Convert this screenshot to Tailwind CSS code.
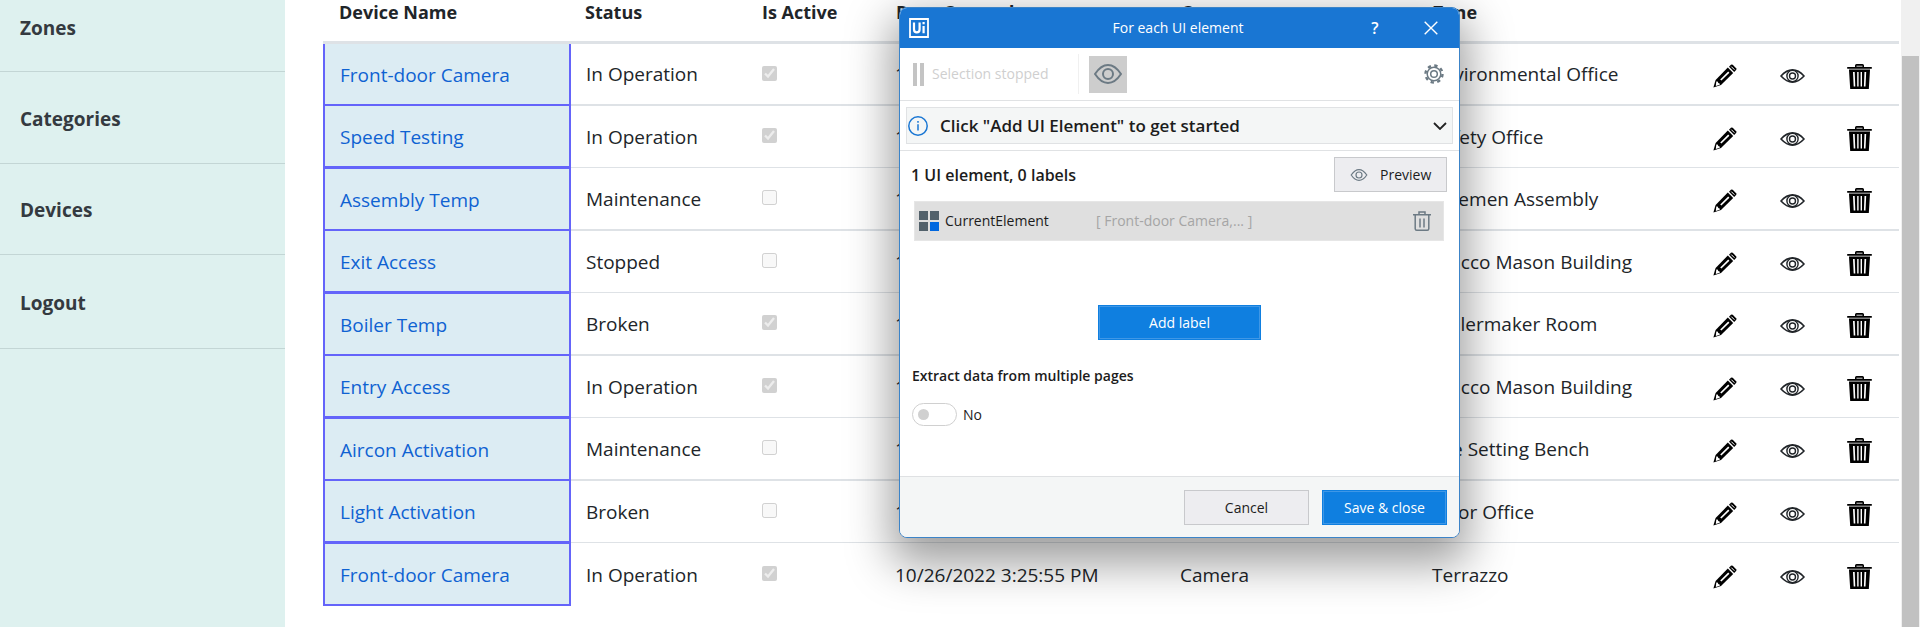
<!DOCTYPE html>
<html lang="en">
<head>
<meta charset="utf-8">
<title>Devices</title>
<script src="https://cdn.jsdelivr.net/npm/@tailwindcss/browser@4"></script>
</head>
<body class="bg-white font-['Open_Sans','Noto_Sans',sans-serif] text-[#212529]">

<svg class="hidden" aria-hidden="true">
  <symbol id="pencil" viewBox="0 0 24 24">
    <path d="M.4 23.600 2.600 16 14.800 3.600 20.200 8.900 8 21z"/>
    <path d="m16 2.800 1.900-2q.9-.8 1.800 0l3.400 3.400q.8.900 0 1.800l-1.900 1.900z"/>
    <path d="m7.200 15.400 8-7.900 1.200 1.200-8 7.900z" fill="#fff"/>
    <path d="m3.300 17.600 1.300-.2.700 1.700 1.600.6-.2 1-3.900 1.400z" fill="#fff"/>
    <path d="m18.300 2.600 3.100 3.100" stroke="#fff" stroke-width="1"/>
  </symbol>
  <symbol id="eye-bold" viewBox="0 0 25 14">
    <path d="M1 7C5 2.600 8.500.9 12.500.9S20 2.600 24 7c-4 4.400-7.500 6.100-11.500 6.100S5 11.400 1 7z" fill="none" stroke="currentColor" stroke-width="1.600"/>
    <circle cx="12.500" cy="7" r="5.600" fill="none" stroke="currentColor" stroke-width="1.400"/>
    <circle cx="12.500" cy="7" r="3" fill="none" stroke="currentColor" stroke-width="1.400"/>
  </symbol>
  <symbol id="trash-bold" viewBox="0 0 25 25">
    <path d="M8 3V1.500Q8 0 9.500 0h6Q17 0 17 1.500V3h7.800v1.800H.2V3z"/>
    <path d="M9.500 1.600h6V3h-6z" fill="#999"/>
    <path d="M2 5.500h21L21.800 25H3.200z"/>
    <path d="m6 8 .7 14.500h1.600L7.700 8zM10.200 8v14.500h1.400V8zM13.600 8v14.500H15V8zM17.500 8l-.6 14.500h1.600L19.200 8z" fill="#fff"/>
  </symbol>
  <symbol id="eye" viewBox="0 0 28 20">
    <path d="M1 10C5 4 9 1 14 1s9 3 13 9c-4 6-8 9-13 9S5 16 1 10z" fill="none" stroke="currentColor" stroke-width="2"/>
    <circle cx="14" cy="10" r="5" fill="none" stroke="currentColor" stroke-width="2"/>
  </symbol>
</svg>

<div class="flex min-h-screen">
  <nav class="w-[285px] shrink-0 bg-[#def1ef] text-[19px] leading-6 font-bold text-[#343a40]" aria-label="Main">
    <a href="#zones" class="flex h-[72px] items-center border-b border-[#c3d6d5] px-5 pb-4">Zones</a>
    <a href="#categories" class="flex h-[92px] items-center border-b border-[#c3d6d5] px-5 pt-[2px]">Categories</a>
    <a href="#devices" class="flex h-[91px] items-center border-b border-[#c3d6d5] px-5 pt-[2px]">Devices</a>
    <a href="#logout" class="flex h-[94px] items-center border-b border-[#c3d6d5] px-5 pt-[2px]">Logout</a>
  </nav>

  <main class="min-w-0 flex-1 pr-[2px] pl-[38px]">
    <table class="w-full table-fixed border-separate border-spacing-0 text-left text-[19px] leading-6">
      <colgroup>
        <col class="w-[248px]"><col class="w-[175px]"><col class="w-[134px]"><col class="w-[285px]"><col class="w-[252px]"><col><col class="w-[66px]"><col class="w-[67px]"><col class="w-[68px]">
      </colgroup>
      <thead>
        <tr class="h-[44px] align-top text-[18px] font-bold">
          <th class="border-b-3 border-[#dee2e6] px-4">Device Name</th>
          <th class="border-b-3 border-[#dee2e6] px-[14px]">Status</th>
          <th class="border-b-3 border-[#dee2e6] px-4">Is Active</th>
          <th class="border-b-3 border-[#dee2e6] px-4">Date Created</th>
          <th class="border-b-3 border-[#dee2e6] px-4">Category</th>
          <th class="border-b-3 border-[#dee2e6] px-4">Zone</th>
          <td class="border-b-3 border-[#dee2e6]"></td>
          <td class="border-b-3 border-[#dee2e6]"></td>
          <td class="border-b-3 border-[#dee2e6]"></td>
        </tr>
      </thead>
      <tbody id="rows"></tbody>
    </table>
  </main>

  <div class="w-[19px] shrink-0 bg-[#f0f0f0] pt-14 pl-px" aria-hidden="true">
    <div class="h-full w-[17px] bg-[#c1c1c1]"></div>
  </div>
</div>

<section role="dialog" aria-labelledby="dlg-title" class="absolute top-[7px] left-[899px] flex w-[561px] flex-col overflow-hidden rounded-lg border border-[#3c84c8] bg-white text-[14px] leading-5 text-[#1c1c1c] shadow-[0_18px_45px_8px_rgba(0,0,0,0.38)]">
  <header class="flex h-[40px] shrink-0 items-center bg-[#1976d3] pr-5 pl-[9px] text-white">
    <svg class="h-5 w-5" viewBox="0 0 20 20" fill="none" stroke="#fff" aria-hidden="true">
      <path d="M1 1h18v18H1z" stroke-width="1.800"/>
      <path d="M5 4.500v6.700q0 3.200 2.800 3.200t2.800-3.200V4.500M14.600 8v7.200" stroke-width="2.200"/>
      <path d="M14.600 4v2.300" stroke-width="2.200"/>
    </svg>
    <h1 id="dlg-title" class="flex-1 pl-16 text-center">For each UI element</h1>
    <button type="button" aria-label="Help" class="w-6 text-[16px] font-semibold">?</button>
    <button type="button" aria-label="Close" class="ml-9 flex w-4 justify-center">
      <svg class="h-[14px] w-[14px]" viewBox="0 0 14 14" fill="none" stroke="#fff" stroke-width="1.400"><path d="m.7.7 12.600 12.600M13.300.7.7 13.300"/></svg>
    </button>
  </header>

  <div class="flex h-[53px] shrink-0 items-center border-b border-[#e0e2e4] pr-[15px] pl-[13px]">
    <svg class="h-[23px] w-[11px]" viewBox="0 0 11 23" fill="#c4c4c4" aria-hidden="true"><path d="M0 0h4v23H0zM7 0h4v23H7z"/></svg>
    <span class="ml-2 w-[146px] text-[14px] text-[#cfcfcf]">Selection stopped</span>
    <span class="h-10 w-px bg-[#f0f0f0]"></span>
    <button type="button" aria-label="Show highlights" class="ml-[10px] flex h-[37px] w-[38px] items-center justify-center bg-[#cdcdcd] text-[#6c7a84]">
      <svg class="h-5 w-7"><use href="#eye"/></svg>
    </button>
    <button type="button" aria-label="Settings" class="ml-auto text-[#6c7a84]">
      <svg class="block h-5 w-5" viewBox="-10 -10 20 20" fill="none" stroke="currentColor" stroke-width="1.500">
        <circle r="6.800"/>
        <circle r="3.300"/>
        <circle r="8.500" stroke-width="2.400" stroke-dasharray="3.340 3.336"/>
      </svg>
    </button>
  </div>

  <div class="shrink-0 border-b border-[#e0e2e4] px-[6px] py-[6px]">
    <button type="button" class="flex h-[37px] w-full items-center border border-[#e0e2e4] bg-[#f4f6f6] pr-[5px] pl-px text-left text-[17px] font-semibold">
      <svg class="h-5 w-5" viewBox="0 0 20 20" fill="none" stroke="#1976d3" stroke-width="1.500" aria-hidden="true"><circle cx="10" cy="10" r="9.200"/><path d="M10 8.300v6.200M10 5v1.800"/></svg>
      <span class="ml-3 flex-1">Click "Add UI Element" to get started</span>
      <svg class="h-2 w-[14px]" viewBox="0 0 14 8" fill="none" stroke="#222" stroke-width="1.800" aria-hidden="true"><path d="m1 1 6 6 6-6"/></svg>
    </button>
  </div>

  <div class="flex shrink-0 items-center justify-between pt-[6px] pr-3 pl-[11px]">
    <h2 class="text-[16px] font-semibold">1 UI element, 0 labels</h2>
    <button type="button" class="flex h-[35px] w-[113px] items-center border border-[#c8c9cc] bg-[#ededf0] pl-[15px]">
      <svg class="h-3 w-[18px] text-[#6c7a84]" aria-hidden="true"><use href="#eye"/></svg>
      <span class="ml-3">Preview</span>
    </button>
  </div>

  <div class="mr-[15px] ml-[14px] mt-[9px] flex h-[40px] shrink-0 items-center border border-[#e6e6e6] bg-[#dfdfdf] pr-3 pl-1">
    <svg class="h-5 w-5" viewBox="0 0 20 20" fill="#52616b" aria-hidden="true"><path d="M0 0h9v9H0zM11 0h9v9h-9zM0 11h9v9H0z"/><path d="M11 11h9v9h-9z" fill="#0067df"/></svg>
    <span class="ml-[6px] w-[151px]">CurrentElement</span>
    <span class="text-[#a5a5a5]">[ Front-door Camera,... ]</span>
    <button type="button" aria-label="Delete CurrentElement" class="ml-auto text-[#6c7a84]">
      <svg class="block h-5 w-[18px]" viewBox="0 0 18 20" fill="none" stroke="currentColor" stroke-width="1.500"><path d="M0 3.800h18M6 3.500V1h6v2.500M2.200 4v13.700q0 1.500 1.500 1.500h10.600q1.500 0 1.500-1.500V4M7 7.500v9M11 7.500v9"/></svg>
    </button>
  </div>

  <button type="button" class="mx-auto mt-16 h-[35px] w-[163px] shrink-0 border border-[#0f7fe0] bg-[#0f7fe0] text-white inset-ring inset-ring-[#3f97e6]">Add label</button>

  <fieldset class="mt-[26px] h-[110px] shrink-0 px-3">
    <legend class="font-semibold">Extract data from multiple pages</legend>
    <label class="mt-[17px] flex items-center gap-[6px]">
      <input type="checkbox" role="switch" class="flex h-[23px] w-[45px] appearance-none items-center rounded-full border border-[#d0d0d0] bg-white pl-[5px] before:h-[11px] before:w-[11px] before:rounded-full before:bg-[#d0d0d0]">
      No
    </label>
  </fieldset>

  <footer class="flex shrink-0 items-center justify-end gap-[13px] border-t border-[#dfe1e3] bg-[#f4f6f6] px-3 pt-[13px] pb-3">
    <button type="button" class="h-[35px] w-[125px] border border-[#c8c9cc] bg-[#ededf0]">Cancel</button>
    <button type="button" class="h-[35px] w-[125px] border border-[#0f7fe0] bg-[#0f7fe0] text-white inset-ring inset-ring-[#3f97e6]">Save &amp; close</button>
  </footer>
</section>

<script>
  const devices = [
    ["Front-door Camera", "In Operation", true, "Environmental Office"],
    ["Speed Testing", "In Operation", true, "Safety Office"],
    ["Assembly Temp", "Maintenance", false, "Linemen Assembly"],
    ["Exit Access", "Stopped", false, "Stucco Mason Building"],
    ["Boiler Temp", "Broken", true, "Boilermaker Room"],
    ["Entry Access", "In Operation", true, "Stucco Mason Building"],
    ["Aircon Activation", "Maintenance", false, "Tile Setting Bench"],
    ["Light Activation", "Broken", false, "Floor Office"],
    ["Front-door Camera", "In Operation", true, "Terrazzo"],
  ];
  document.getElementById("rows").innerHTML = devices.map(([name, status, active, zone], i) => {
    const last = i === devices.length - 1;
    const line = last ? "" : i % 2 ? "border-b border-[#dee2e6]" : "border-b-2 border-[#dee2e6]";
    const height = i > 0 && i % 2 === 0 ? "h-[63px]" : "h-[62px]";
    const top = i > 0 && i % 2 === 0 ? "border-t" : "";
    return `<tr class="${height}">
      <td class="border-x-2 border-b-2 ${top} border-[#6464fa] bg-[#dcecf3] px-[15px] pt-[2px]"><a href="#device-${i + 1}" class="text-[#0f62d2]">${name}</a></td>
      <td class="${line} px-[15px]">${status}</td>
      <td class="${line} px-4 pb-[2px]"><input type="checkbox" disabled ${active ? "checked" : ""} aria-label="${name} is active" class="block h-[15px] w-[15px]"></td>
      <td class="${line} px-[15px]">10/26/2022 3:25:55 PM</td>
      <td class="${line} px-[15px]">Camera</td>
      <td class="${line} px-[15px]">${zone}</td>
      <td class="${line} pt-1 pl-[15px]"><a href="#edit-${i + 1}" aria-label="Edit ${name}" class="block"><svg class="block h-6 w-6"><use href="#pencil"/></svg></a></td>
      <td class="${line} pt-1 pl-4"><a href="#view-${i + 1}" aria-label="View ${name}" class="block"><svg class="block h-[14px] w-[25px]"><use href="#eye-bold"/></svg></a></td>
      <td class="${line} pt-1 pl-4"><a href="#delete-${i + 1}" aria-label="Delete ${name}" class="block"><svg class="block h-[25px] w-[25px]"><use href="#trash-bold"/></svg></a></td>
    </tr>`;
  }).join("");
</script>
</body>
</html>
